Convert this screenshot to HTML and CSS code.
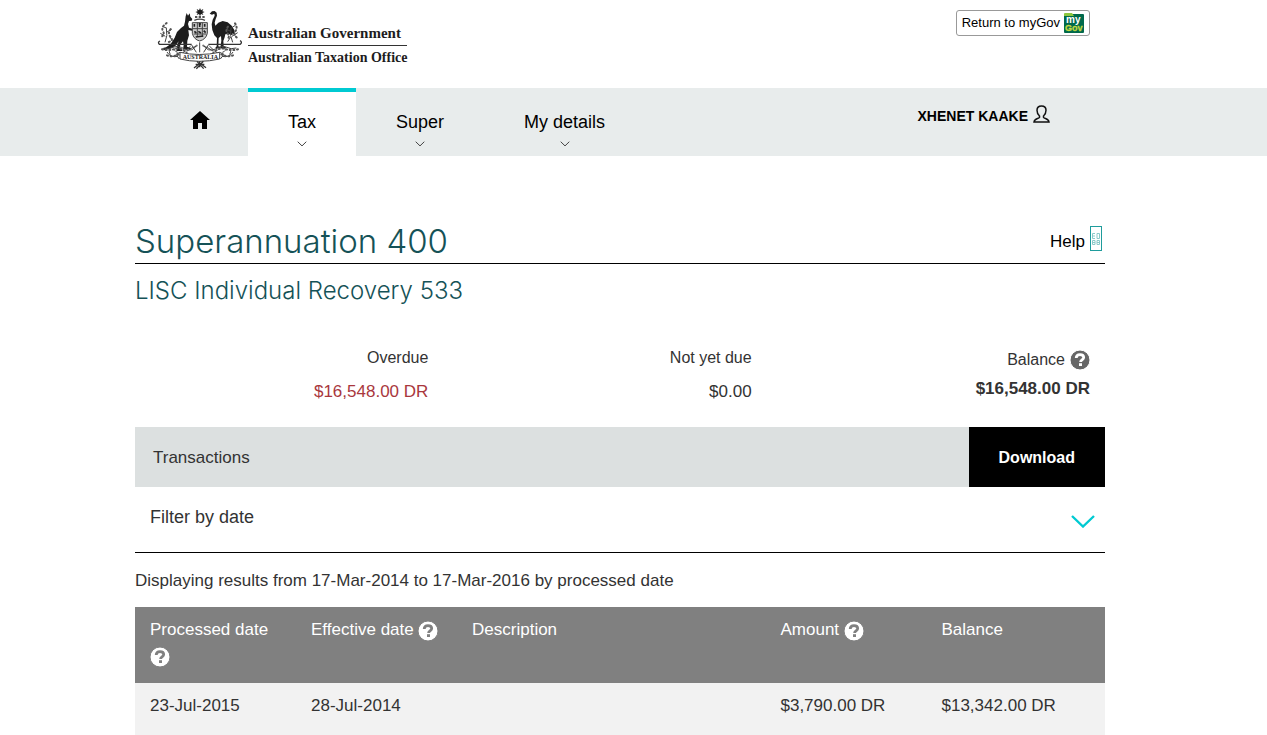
FILE: index.html
```html
<!DOCTYPE html>
<html lang="en">
<head>
<meta charset="utf-8">
<title>Australian Taxation Office</title>
<link rel="stylesheet" href="styles.css">
</head>
<body>
<svg class="defs" aria-hidden="true">
  <symbol id="help-mark" viewBox="0 0 20 20">
    <circle cx="10" cy="10" r="10" fill="currentColor"/>
    <path class="mark" d="M6.200 8C6.300 5.700 7.800 4.600 10 4.600c2.200 0 3.700 1.100 3.700 3 0 2.300-3.100 2.400-3.100 4.400" fill="none" stroke-width="2.800"/>
    <path class="mark" d="M10.500 13.200v2.800" fill="none" stroke-width="3"/>
  </symbol>
  <symbol id="small-chevron" viewBox="0 0 10 6">
    <path d="M.7.7 5 4.9 9.3.7" fill="none" stroke="#444" stroke-width="1"/>
  </symbol>
</svg>

<header class="masthead">
  <div class="container masthead-row">
    <a class="brand" href="#">
      <svg class="arms" viewBox="0 0 270 198" aria-hidden="true">
        <g fill="#1d1d1d" stroke="none">
          <path d="M135 9l3 7 7-4-3 7 7 2-7 3 3 6-7-3-3 7-3-7-7 3 3-6-7-3 7-2-3-7 7 4z"/>
          <path d="M120 34h7v4h-7zM131 34h7v4h-7zM142 34h7v4h-7z"/>
          <path d="M92 34l3-10 4 8 5-7 2 10 6 7-2 5-8 1-3 9 3 11 10 3 6-3 2 4-9 5-11-2 2 16-5 16-1 18 12 4-1 4H84l2-12-2-12-8 10-2 11 8 4-1 4H64l3-19 4-10-10 14-16 8-17 4-8-3 13-5 14-10 12-19 7-17 12-12 9-7 3-12z"/>
          <path d="M164 26l7-7 8-1 6 5 1 9-4 10-3 11 2 9 9-9 13-5 15 4 12 10 8 13 2 15-8-5 1 6-12-4-10 1-2 9-4 11 1 15 7 4-1 3h-16l3-23-1-14-7 6-1 25 6 3-1 3h-15l5-6 1-25-8-8-6-16-2-17 3-14 6-12-1-6-7 3z"/>
        </g>
        <g fill="none" stroke="#444" stroke-width="3">
          <path d="M112 53h45v32q-4 18-23 23-18-5-22-23z" fill="#ccc"/>
          <path d="M112 71h45M127 53v43M142 53v43M116 87h38"/>
          <path d="M131 57h7M134 54v12M118 57v8M149 57v8M130 79l8 5M146 77l6 6M118 79l6 5M122 96l23-3" stroke="#222" stroke-width="5"/>
          <path d="M118 46q16-7 32 0" stroke-width="4"/>
          <path d="M12 118h98M160 118h96M13 118q-6-7 2-10M256 118q7-7-1-11" stroke="#333" stroke-width="4"/>
          <path d="M125 119q-11 24-37 13-17-12-34-5-11 7-28 2M145 119q12 24 37 13 17-12 34-5 11 7 28 2M134 112v30M107 123q-12 14-38 31-23 5-33-13M163 123q12 14 38 31 23 5 33-13"/>
          <path d="M110 120l14 22M160 120l-14 22M96 138q16-12 32-16M174 138q-16-12-32-16M62 128q-8 10 6 14M208 128q8 10-6 14M46 131q-6 10 0 18M224 131q6 10 0 18"/>
          <path d="M30 112q9-19 4-44M31 94l-15-9M34 82l16-9M34 69l-12-5M52 108l-8-14M233 112q-10-20-5-44M231 94l17-11M229 80l-16-8M229 69l12-8M218 110l9-14"/>
          <path d="M75 142q56 13 119 0v20q-62 14-119 0zM75 142l-12 6 10 14M194 142l13 6-11 14" fill="#fff"/>
          <path d="M117 189l18-15 18 14M126 169l20 22M145 169l-21 22M134 169v18M122 178h26" stroke="#333" stroke-width="4"/>
        </g>
        <g fill="none" stroke="#555" stroke-width="6" stroke-linecap="round" stroke-dasharray="3 8">
          <path d="M35 54q-18 13-11 25t-8 17M47 72q-10 14 0 24t-6 15M219 65q-9 12-1 21t-2 17M240 55q9 13 1 24t8 21M21 133q20 5 38-1t36 11M36 151q18 7 37-4M249 133q-20 5-38-1t-36 11M234 151q-18 7-37-4"/>
        </g>
        <text x="83" y="163" font-family="Liberation Serif, serif" font-size="18" font-weight="700" fill="#222">AUSTRALIA</text>
      </svg>
      <span class="brand-words">
        <span class="brand-top">Australian Government</span>
        <span class="brand-bottom">Australian Taxation Office</span>
      </span>
    </a>
    <button class="mygov" type="button">Return to myGov
      <svg class="mygov-logo" viewBox="0 0 20 20" aria-hidden="true">
        <rect y="1" width="20" height="19" rx="1" fill="#00694b"/>
        <path d="M0 3V1q0-1 1-1h7l2 3z" fill="#8cc63f"/>
        <text x="2" y="10" font-family="Liberation Sans, sans-serif" font-size="10" font-weight="700" fill="#fff">my</text>
        <text x="1" y="18" font-family="Liberation Sans, sans-serif" font-size="9" font-weight="700" fill="#c4d940" stroke="#c4d940" stroke-width=".3">Gov</text>
      </svg>
    </button>
  </div>
</header>

<nav class="nav" aria-label="Main">
  <div class="container nav-row">
    <a class="tab home" href="#" aria-label="Home">
      <svg class="home-icon" viewBox="0 0 20 18" aria-hidden="true"><path d="M10 0l10 9h-3v9h-5v-6H8v6H3V9H0z"/></svg>
    </a>
    <a class="tab active" href="#">Tax<svg class="small-chevron"><use href="#small-chevron"/></svg></a>
    <a class="tab" href="#">Super<svg class="small-chevron"><use href="#small-chevron"/></svg></a>
    <a class="tab" href="#">My details<svg class="small-chevron"><use href="#small-chevron"/></svg></a>
    <a class="user" href="#">XHENET KAAKE
      <svg class="user-icon" viewBox="0 0 17 18" aria-hidden="true"><path d="M6.500 11C4.800 9.600 4 7.500 4 5.300 4 2.500 5.600 1 8.500 1S13 2.500 13 5.300c0 2.200-.8 4.300-2.500 5.700v1.400c1 1.600 5 .9 5.500 4.600H1c.5-3.700 4.500-3 5.500-4.600z" fill="none" stroke="#111" stroke-width="1.500"/></svg>
    </a>
  </div>
</nav>

<main class="container main">
  <div class="title-row">
    <h1>Superannuation 400</h1>
    <a class="help" href="#">Help
      <svg class="glyph-box" viewBox="0 0 12 25" aria-hidden="true">
        <rect x=".5" y=".5" width="11" height="24" fill="none" stroke="#1f9c9c"/>
        <path d="M5 7.500H2.500v5H5M2.500 10H5M7 7.500h2.500v5H7zM2.500 14.500H5v4H2.500zM2.500 16.500H5M7 14.500h2.500v4H7zM7 16.500h2.500" fill="none" stroke="#8ccaca"/>
      </svg>
    </a>
  </div>
  <h2>LISC Individual Recovery 533</h2>

  <dl class="summary">
    <div class="sum"><dt>Overdue</dt><dd class="overdue">$16,548.00 DR</dd></div>
    <div class="sum"><dt>Not yet due</dt><dd>$0.00</dd></div>
    <div class="sum total"><dt>Balance <svg class="q dark"><use href="#help-mark"/></svg></dt><dd>$16,548.00 DR</dd></div>
  </dl>

  <div class="bar">
    <span class="bar-title">Transactions</span>
    <button class="download" type="button">Download</button>
  </div>

  <button class="filter" type="button" aria-expanded="false">Filter by date
    <svg class="big-chevron" viewBox="0 0 24 13" aria-hidden="true"><path d="M1 1l11 10.500L23 1" fill="none" stroke="#00cad2" stroke-width="2.400"/></svg>
  </button>

  <p class="results">Displaying results from 17-Mar-2014 to 17-Mar-2016 by processed date</p>

  <table class="transactions">
    <colgroup><col class="col-date"><col class="col-date"><col class="col-desc"><col class="col-date"><col></colgroup>
    <thead>
      <tr>
        <th scope="col">Processed date <svg class="q light"><use href="#help-mark"/></svg></th>
        <th scope="col">Effective date <svg class="q light"><use href="#help-mark"/></svg></th>
        <th scope="col">Description</th>
        <th scope="col">Amount <svg class="q light"><use href="#help-mark"/></svg></th>
        <th scope="col">Balance</th>
      </tr>
    </thead>
    <tbody>
      <tr><td>23-Jul-2015</td><td>28-Jul-2014</td><td></td><td>$3,790.00 DR</td><td>$13,342.00 DR</td></tr>
    </tbody>
  </table>
</main>
</body>
</html>
```

FILE: styles.css
```css
* { box-sizing: border-box; }
body {
  margin: 0;
  background: #fff;
  color: #333;
  font: 17px/24px "Liberation Sans", Arial, sans-serif;
}
a { color: inherit; text-decoration: none; }
button { font: inherit; color: inherit; cursor: pointer; }
.defs { display: none; }

.masthead, .nav, .main { padding-right: 27px; }
.container { max-width: 970px; margin: 0 auto; }
.main.container { max-width: 997px; }

.masthead-row {
  display: flex;
  justify-content: space-between;
  align-items: flex-start;
  min-height: 88px;
  padding: 5px 15px 0 20px;
}
.brand { display: flex; color: #1d1d1d; font-family: "Liberation Serif", "Times New Roman", serif; font-weight: 700; }
.arms { width: 90px; height: 66px; }
.brand-words { display: flex; flex-direction: column; padding: 17px 0 0 3px; line-height: 22px; }
.brand-top { font-size: 15px; border-bottom: 1px solid #333; padding-bottom: 1px; }
.brand-bottom { font-size: 14px; padding-top: 1px; }
.mygov {
  display: flex;
  align-items: center;
  gap: 4px;
  height: 26px;
  margin-top: 5px;
  padding: 0 5px;
  background: #fff;
  border: 1px solid #999;
  border-radius: 3px;
  color: #000;
  font-size: 13px;
}
.mygov-logo { width: 20px; height: 20px; }

.nav { background: #e8ecec; }
.nav-row { display: flex; min-height: 68px; padding: 0 55px 0 17px; color: #000; }
.tab {
  display: flex;
  flex-direction: column;
  align-items: center;
  padding: 18px 40px 0;
  border-top: 4px solid transparent;
  font-size: 18px;
}
.active { background: #fff; border-top-color: #00cad2; }
.small-chevron { width: 10px; height: 6px; margin-top: 7px; }
.home { padding: 18px 38px 0; }
.home-icon { width: 20px; height: 20px; }
.user {
  display: flex;
  align-items: center;
  align-self: flex-start;
  gap: 5px;
  margin-left: auto;
  padding-top: 16px;
  font-size: 14px;
  font-weight: 700;
}
.user-icon { width: 17px; height: 18px; margin-bottom: 4px; }

.main { padding-top: 60px; }
.title-row {
  display: flex;
  justify-content: space-between;
  align-items: center;
  padding: 6px 3px 2px 0;
  border-bottom: 1px solid #000;
}
h1, h2 { margin: 0; color: #155257; font-family: Inter, "Liberation Sans", sans-serif; font-weight: 300; }
h1 { font-size: 33px; line-height: 39px; }
h2 { margin-top: 12px; font-size: 24px; line-height: 30px; }
.help { display: flex; align-items: center; gap: 5px; color: #000; }
.glyph-box { width: 12px; height: 25px; margin-bottom: 6px; }

.summary { display: grid; grid-template-columns: repeat(3, 1fr); margin: 40px 0 23px; text-align: right; }
.sum { padding-right: 30px; }
.sum dt { font-size: 16px; }
.sum dd { margin: 10px 0 0; }
.sum .overdue { color: #a9373d; }
.total { padding-right: 15px; }
.total dt { display: flex; justify-content: flex-end; align-items: center; gap: 5px; min-height: 28px; }
.total dd { margin-top: 3px; font-weight: 700; }
.q { width: 20px; height: 20px; vertical-align: middle; }
.dark { color: #666; stroke: #fff; }
.light { color: #fff; stroke: #808080; }
.q circle { stroke: none; }

.bar { display: flex; justify-content: space-between; align-items: stretch; min-height: 60px; background: #dce0e0; }
.bar-title { padding: 19px 18px 17px; }
.download { padding: 2px 30px 0; background: #000; border: 0; color: #fff; font-size: 16px; font-weight: 700; }
.filter {
  display: flex;
  justify-content: space-between;
  align-items: center;
  width: 100%;
  padding: 18px 10px 23px 15px;
  background: none;
  border: 0;
  border-bottom: 1px solid #000;
  font-size: 18px;
}
.big-chevron { width: 24px; height: 13px; margin-top: 8px; }
.results { margin: 16px 0 14px; }

.transactions { width: 100%; table-layout: fixed; border-collapse: collapse; text-align: left; }
.col-date { width: 16.600%; }
.col-desc { width: 31.800%; }
th, td { padding: 10px 15px; vertical-align: top; font-weight: 400; }
th { height: 76px; background: #808080; color: #fff; line-height: 26px; }
td { height: 52px; padding-top: 11px; background: #f2f2f2; }
```
